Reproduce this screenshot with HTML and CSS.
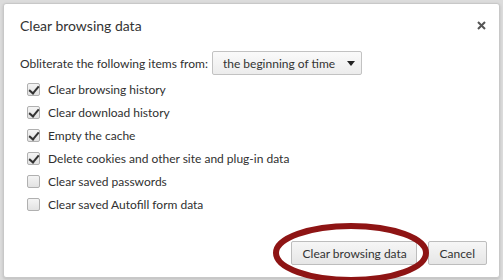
FILE: index.html
```html
<!DOCTYPE html>
<html lang="en">
<head>
    <meta charset="UTF-8">
    <title>Clear browsing data</title>
    <link rel="stylesheet" href="styles.css">
</head>
<body>

<div class="dialog">
    <div class="dialog-header">
        <h1 class="dialog-title">Clear browsing data</h1>
        <button class="close-btn" aria-label="Close">
            <svg width="9" height="9" viewBox="0 0 9 9">
                <path d="M1 1 L8 8 M8 1 L1 8" stroke="#555" stroke-width="2" fill="none"/>
            </svg>
        </button>
    </div>

    <div class="time-row">
        <span>Obliterate the following items from:</span>
        <div class="select-box">
            <span>the beginning of time</span>
            <span class="arrow"></span>
        </div>
    </div>

    <ul class="options">
        <li><span class="checkbox checked"></span>Clear browsing history</li>
        <li><span class="checkbox checked"></span>Clear download history</li>
        <li><span class="checkbox checked"></span>Empty the cache</li>
        <li><span class="checkbox checked"></span>Delete cookies and other site and plug-in data</li>
        <li><span class="checkbox"></span>Clear saved passwords</li>
        <li><span class="checkbox"></span>Clear saved Autofill form data</li>
    </ul>

    <div class="actions">
        <div class="highlight-wrap">
            <button class="btn">Clear browsing data</button>
            <svg class="highlight" width="160" height="64" viewBox="0 0 160 64">
                <ellipse cx="80" cy="31" rx="75" ry="27" stroke="#8e1414" stroke-width="6" fill="none"/>
            </svg>
        </div>
        <button class="btn">Cancel</button>
    </div>
</div>

</body>
</html>
```

FILE: styles.css
```css
* {
    margin: 0;
    padding: 0;
    box-sizing: border-box;
}

body {
    font-family: Lato, 'Open Sans', sans-serif;
    font-size: 12px;
    color: #303030;
    background-color: #dcdcdc;
    width: 503px;
    height: 280px;
    overflow: hidden;
    padding: 3px 3px 0 3px;
}

.dialog {
    background-color: #ffffff;
    width: 497px;
    height: 275px;
    border: 1px solid #c8c8c8;
    border-radius: 3px;
    box-shadow: 0 1px 3px rgba(0, 0, 0, 0.15);
    padding: 0 16px 0 16px;
    position: relative;
}

.dialog-header {
    display: flex;
    justify-content: space-between;
    align-items: center;
    height: 43px;
}

.dialog-title {
    font-size: 14px;
    font-weight: normal;
    color: #333;
}

.close-btn {
    background: none;
    border: none;
    width: 9px;
    height: 9px;
    margin-right: -3px;
    display: flex;
}

.time-row {
    display: flex;
    align-items: center;
    gap: 4px;
    margin-top: 4px;
}

.select-box {
    display: flex;
    align-items: center;
    justify-content: space-between;
    width: 150px;
    height: 24px;
    padding: 0 6px 0 10px;
    border: 1px solid #c2c2c2;
    border-radius: 2px;
    background: linear-gradient(#fafafa, #ececec);
    color: #333;
}

.arrow {
    width: 0;
    height: 0;
    border-left: 4px solid transparent;
    border-right: 4px solid transparent;
    border-top: 5px solid #222;
}

.options {
    list-style: none;
    margin-top: 3px;
    padding-left: 7px;
}

.options li {
    display: flex;
    align-items: center;
    gap: 8px;
    height: 23px;
}

.checkbox {
    width: 13px;
    height: 13px;
    border: 1px solid #b0b0b0;
    border-radius: 2px;
    background: linear-gradient(#f4f4f4, #e2e2e2);
    position: relative;
}

.checkbox.checked::after {
    content: "";
    position: absolute;
    left: 3px;
    top: 0px;
    width: 4px;
    height: 8px;
    border-right: 2px solid #333;
    border-bottom: 2px solid #333;
    transform: rotate(40deg);
}

.actions {
    display: flex;
    justify-content: flex-end;
    gap: 11px;
    margin-top: 25px;
    margin-right: -4px;
}

.highlight-wrap {
    position: relative;
}

.btn {
    font-family: inherit;
    font-size: 12px;
    color: #333;
    height: 24px;
    padding: 0 11px;
    border: 1px solid #bdbdbd;
    border-radius: 2px;
    background: linear-gradient(#f6f6f6, #e6e6e6);
    white-space: nowrap;
}

.highlight-wrap .btn {
    width: 126px;
}

.highlight {
    position: absolute;
    left: -20px;
    top: -19px;
    pointer-events: none;
}
```
